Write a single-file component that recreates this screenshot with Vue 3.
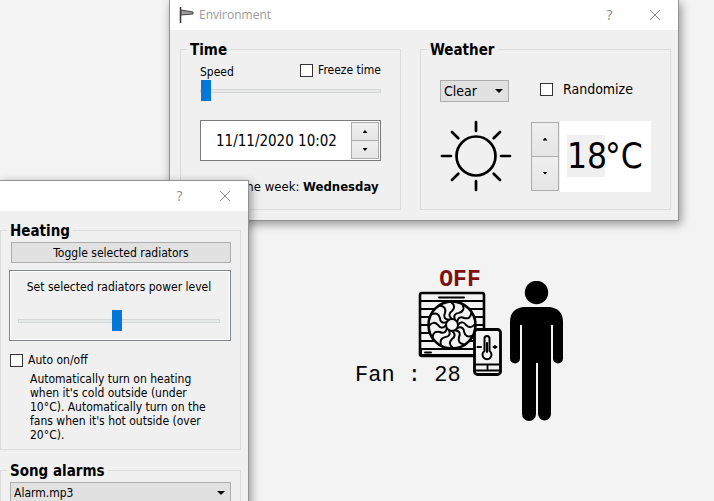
<script setup>
import { ref } from 'vue'

const speed = ref(0)
const freeze = ref(false)
const dateTime = ref('11/11/2020 10:02')
const weather = ref('Clear')
const randomize = ref(false)
const temperature = ref(18)
const power = ref(49)
const auto = ref(false)
const song = ref('Alarm.mp3')
const blades = Array.from({ length: 12 }, (_, i) => i * 30)
const rays = Array.from({ length: 8 }, (_, i) => i * 45)
const slats = [301, 309, 317, 325, 333, 341]
</script>

<template>
  <main class="desktop">
    <section class="room" aria-label="Room plan">
      <div class="fan">
        <p class="fan-state">OFF</p>
        <svg class="fan-icon" viewBox="418 291 84 86" fill="none" stroke="#000" stroke-width="2" stroke-linejoin="round" stroke-linecap="round">
          <rect x="420" y="293" width="64" height="63" rx="2" fill="#f3f3f3" stroke-width="2.6" />
          <path v-for="y in slats" :key="y" :d="`M420 ${y}H484`" />
          <path d="M439 297.500H464" />
          <path d="M421 349H484V355H421Z" fill="#f3f3f3" />
          <path d="M425 352.500H431" />
          <circle cx="452" cy="325" r="23.500" fill="#f3f3f3" stroke-width="2.6" />
          <path v-for="a in blades" :key="a" :transform="`rotate(${a} 452 325)`" d="M452 319C448 316 449 313 452 311C455 308 455 305 451 302" />
          <circle cx="452" cy="325" r="6" fill="#f3f3f3" />
          <rect x="474.500" y="329.500" width="26" height="45" rx="3" fill="#f3f3f3" stroke-width="2.8" />
          <path d="M475 364.500H500M475 370.500H500M487.500 365V369" stroke-width="1.8" />
          <path d="M484.500 351V338.500a2.500 2.500 0 0 1 5 0V351a4.500 4.500 0 1 1-5 0Z" />
          <path d="M487 343V352M477.500 347H481M493.500 347H496.500M495 346V348" />
        </svg>
      </div>
      <p class="fan-label">Fan : 28</p>
      <svg class="person" viewBox="0 0 54 140">
        <circle cx="26.500" cy="11.500" r="11.700" />
        <path d="M13 26H40Q53 28 53 41V77.500a5 5 0 0 1-10 0V44H41V133a6.500 6.500 0 0 1-13 0V82H26V133a6.500 6.500 0 0 1-14 0V44H10V77.500a5 5 0 0 1-10 0V41Q0 28 13 26Z" />
      </svg>
    </section>

    <section class="window environment">
      <header class="titlebar">
        <svg class="flag" viewBox="0 0 16 18">
          <path d="M2.500 1V17" stroke="#333" stroke-width="1.500" />
          <path d="M3 4L15 6V8L3 9Z" fill="#a09ba0" stroke="#444" />
        </svg>
        <h1 class="title">Environment</h1>
        <button class="caption" aria-label="Help">?</button>
        <button class="caption" aria-label="Close">
          <svg viewBox="0 0 12 12"><path d="M1 1L11 11M11 1L1 11" stroke="#8c8c8c" /></svg>
        </button>
      </header>
      <div class="groups">
        <fieldset class="group time">
          <legend>Time</legend>
          <div class="speed-row">
            <label for="speed">Speed</label>
            <label class="check"><input v-model="freeze" type="checkbox">Freeze time</label>
          </div>
          <input id="speed" v-model="speed" class="slider" type="range" min="0" max="100">
          <div class="date">
            <input v-model="dateTime" type="text" aria-label="Date and time">
            <div class="spin">
              <button aria-label="Later"><i class="up"></i></button>
              <button aria-label="Earlier"><i class="down"></i></button>
            </div>
          </div>
          <p class="weekday">Day of the week: <b>Wednesday</b></p>
        </fieldset>
        <fieldset class="group weather">
          <legend>Weather</legend>
          <div class="weather-row">
            <span class="drop">
              <select v-model="weather" aria-label="Weather"><option>Clear</option><option>Rain</option></select>
              <i class="down large"></i>
            </span>
            <label class="check big"><input v-model="randomize" type="checkbox">Randomize</label>
          </div>
          <div class="temp-row">
            <svg class="sun" viewBox="0 0 72 72" fill="none" stroke="#000" stroke-width="2.700" stroke-linecap="round">
              <circle cx="36" cy="36" r="19.500" />
              <path v-for="a in rays" :key="a" :transform="`rotate(${a} 36 36)`" d="M36 2V11" />
            </svg>
            <div class="spin tall">
              <button aria-label="Warmer"><i class="up"></i></button>
              <button aria-label="Colder"><i class="down"></i></button>
            </div>
            <label class="temp"><input v-model="temperature" type="text" aria-label="Temperature">°C</label>
          </div>
        </fieldset>
      </div>
    </section>

    <section class="window controls">
      <header class="titlebar">
        <h1 class="title"></h1>
        <button class="caption" aria-label="Help">?</button>
        <button class="caption" aria-label="Close">
          <svg viewBox="0 0 12 12"><path d="M1 1L11 11M11 1L1 11" stroke="#8c8c8c" /></svg>
        </button>
      </header>
      <fieldset class="group heating">
        <legend>Heating</legend>
        <button class="toggle">Toggle selected radiators</button>
        <div class="power">
          <label for="power">Set selected radiators power level</label>
          <input id="power" v-model="power" class="slider" type="range" min="0" max="100">
        </div>
        <label class="check auto"><input v-model="auto" type="checkbox">Auto on/off</label>
        <p class="hint">Automatically turn on heating when it's cold outside (under 10°C). Automatically turn on the fans when it's hot outside (over 20°C).</p>
      </fieldset>
      <fieldset class="group songs">
        <legend>Song alarms</legend>
        <span class="drop">
          <select v-model="song" aria-label="Song"><option>Alarm.mp3</option></select>
          <i class="down large"></i>
        </span>
      </fieldset>
    </section>
  </main>
</template>

<style>
body { margin: 0; background: #f3f3f3; }
</style>

<style scoped>
* { box-sizing: border-box; }
.desktop {
  position: relative;
  min-height: 100vh;
  overflow: hidden;
  background: #f3f3f3;
  color: #000;
  font: 12px/14px "DejaVu Sans Condensed", "DejaVu Sans", sans-serif;
}
p, h1 { margin: 0; }
button, input, select { font: inherit; color: inherit; margin: 0; }
button { padding: 0; }

.fan { position: absolute; left: 418px; top: 269px; width: 84px; }
.fan-state {
  width: 84px;
  text-align: center;
  font: bold 23px/22px "Liberation Mono", monospace;
  color: #7d1010;
}
.fan-icon { display: block; width: 84px; height: 86px; }
.fan-label {
  position: absolute;
  left: 355px;
  top: 363px;
  font: 22px/26px "Liberation Mono", monospace;
  white-space: pre;
}
.person { position: absolute; left: 510px; top: 281px; width: 54px; height: 140px; }

.window {
  position: absolute;
  background: #f0f0f0;
  border: 1px solid #929292;
  box-shadow: 2px 3px 9px rgba(0, 0, 0, 0.4);
}
.environment { left: 169px; top: 0; width: 510px; border-top: 0; padding-bottom: 10px; }
.controls { left: 0; top: 180px; width: 249px; min-height: 330px; border-left: 0; }
.titlebar { display: flex; align-items: center; height: 30px; padding-right: 1px; background: #fff; }
.title {
  flex: 1;
  font: 12px/16px "Open Sans", sans-serif;
  color: #999;
}
.flag { width: 16px; height: 18px; margin: 0 5px 0 8px; }
.caption {
  width: 45px;
  height: 30px;
  border: 0;
  background: none;
  color: #8c8c8c;
  font: 14px/30px "Open Sans", sans-serif;
}
.caption svg { display: block; width: 12px; height: 12px; margin: 0 auto; }

.groups { display: flex; gap: 19px; padding: 9px 7px 0 10px; }
.group { min-width: 0; margin: 0; border: 1px solid #dcdcdc; }
.group legend { padding: 2px 3px 0; font-size: 15px; line-height: 18px; font-weight: bold; }
.groups legend { margin-left: -13px; }
.controls legend { margin-left: -2px; }
.time { flex: 221 1 221px; height: 171px; padding: 2px 19px 0; }
.weather { flex: 251 1 251px; height: 171px; padding: 21px 19px 0; }

.check { display: flex; align-items: center; gap: 5px; }
.check input {
  appearance: none;
  width: 13px;
  height: 13px;
  border: 1px solid #333;
  background: #fff;
}
.speed-row { display: flex; justify-content: space-between; align-items: flex-end; height: 18px; }
.speed-row .check { padding-bottom: 2px; }

.slider { appearance: none; display: block; width: 100%; height: 21px; background: none; }
.time .slider { margin-top: 1px; }
.slider::-webkit-slider-runnable-track { height: 4px; border: 1px solid #d6d6d6; background: #e7eaea; }
.slider::-webkit-slider-thumb { appearance: none; width: 10px; height: 21px; margin-top: -10px; background: #0078d7; }

.date {
  display: flex;
  height: 41px;
  margin-top: 19px;
  padding: 1px;
  border: 1px solid #7a7a7a;
  background: #fff;
}
.date input { flex: 1; min-width: 0; padding: 0 0 0 14px; border: 0; background: none; font-size: 15px; }
.spin { display: flex; flex-direction: column; width: 28px; border: 1px solid #acacac; }
.spin button { flex: 1; display: grid; place-items: center; border: 0; background: linear-gradient(#efefef, #e5e5e5); }
.spin button + button { border-top: 1px solid #acacac; }
.up, .down { width: 5px; height: 3px; background: #000; clip-path: polygon(50% 0, 100% 100%, 0 100%); }
.down { clip-path: polygon(0 0, 100% 0, 50% 100%); }
.down.large { width: 8px; height: 4px; }
.weekday { margin-top: 19px; text-align: right; padding-right: 5px; font-size: 13px; white-space: nowrap; }

.drop { position: relative; display: block; }
.drop select {
  appearance: none;
  display: block;
  width: 100%;
  height: 22px;
  padding: 0 3px;
  border: 1px solid #adadad;
  border-radius: 0;
  background: #e1e1e1;
}
.drop .down { position: absolute; right: 6px; top: 50%; margin-top: -2px; }
.weather-row { display: flex; align-items: center; gap: 31px; }
.weather-row .drop { width: 69px; }
.weather-row select { font-size: 14px; }
.check.big { gap: 10px; padding-bottom: 4px; font-size: 14px; }
.temp-row { display: flex; align-items: center; margin-top: 18px; }
.sun { width: 72px; height: 72px; }
.tall { height: 69px; margin: 0 1px 0 19px; }
.temp { display: flex; align-items: center; width: 91px; height: 71px; padding-left: 7px; background: #fff; font-size: 35px; line-height: 42px; }
.temp input { width: 38px; height: 42px; padding: 0; border: 0; background: #f0f0f0; }

.controls .group { margin-right: 7px; padding: 2px 9px 0 8px; }
.controls .heating { height: 230px; margin-top: 9px; }
.toggle { display: block; width: calc(100% - 2px); height: 21px; margin-left: 2px; border: 1px solid #adadad; background: #e1e1e1; }
.power { margin-top: 7px; padding: 9px 10px 0 8px; border: 1px solid #828790; box-shadow: inset 0 0 0 1px #fff; height: 71px; text-align: center; }
.power .slider { margin-top: 16px; }
.auto { margin: 12px 0 0 1px; }
.hint { margin: 5px 16px 0 21px; }
.controls .songs { margin-top: 10px; height: 100px; }
.songs .drop { margin-left: 1px; }
</style>
